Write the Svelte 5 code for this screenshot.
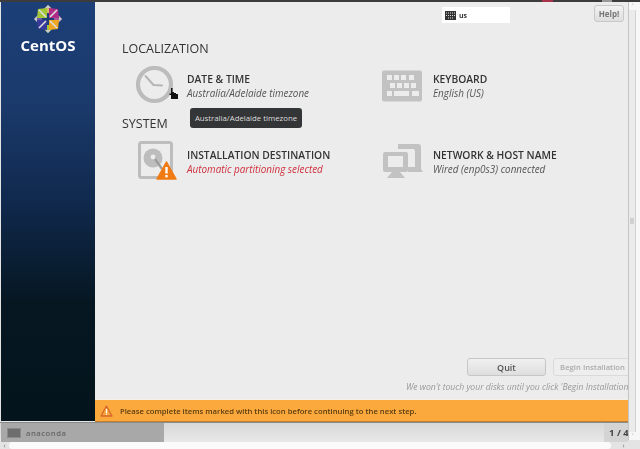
<script>
  const localization = [
    { icon: 'clock', title: 'DATE & TIME', sub: 'Australia/Adelaide timezone' },
    { icon: 'keyboard', title: 'KEYBOARD', sub: 'English (US)' }
  ];
  const system = [
    { icon: 'disk', title: 'INSTALLATION DESTINATION', sub: 'Automatic partitioning selected', warn: true },
    { icon: 'network', title: 'NETWORK & HOST NAME', sub: 'Wired (enp0s3) connected' }
  ];
</script>

{#snippet icon(name)}
  {#if name === 'clock'}
    <svg width="40" height="40" viewBox="0 0 40 40">
      <circle cx="18.5" cy="18.5" r="16.5" fill="#ececec" stroke="#bcbcbc" stroke-width="4.2"/>
      <path d="M9.5 10 L17.5 19 L26 19.5" fill="none" stroke="#b4b4b4" stroke-width="1.9" stroke-linecap="round" stroke-linejoin="round"/>
    </svg>
  {:else if name === 'keyboard'}
    <svg width="40" height="32" viewBox="0 0 40 32">
      <rect width="40" height="31" y="0.5" rx="2" fill="#c2c2c2"/>
      <g fill="#ececec">
        <rect x="5" y="5" width="5" height="5"/><rect x="12" y="5" width="5" height="5"/><rect x="19" y="5" width="5" height="5"/><rect x="27" y="5" width="5" height="5"/>
        <rect x="8" y="13" width="5" height="5"/><rect x="15" y="13" width="5" height="5"/><rect x="22" y="13" width="5" height="5"/><rect x="29" y="13" width="5" height="5"/>
        <rect x="5" y="21" width="5" height="5"/><rect x="12" y="21" width="15" height="5"/><rect x="30" y="21" width="7" height="5"/>
      </g>
    </svg>
  {:else if name === 'disk'}
    <svg class="over" width="42" height="40" viewBox="0 0 42 40">
      <rect x="3.5" y="0.5" width="32" height="35" rx="2" fill="#ececec" stroke="#bdbdbd" stroke-width="3"/>
      <circle cx="17" cy="16" r="9.5" fill="#bdbdbd"/>
      <circle cx="17" cy="15" r="2.4" fill="#ececec"/>
      <path d="M19 17 L26 27" stroke="#9c9c9c" stroke-width="2.2"/>
      <path d="M30.5 20 L40 37 H21 Z" fill="#f07a13" stroke="#f07a13" stroke-width="1.5" stroke-linejoin="round"/>
      <rect x="29.3" y="25" width="2.4" height="6.5" fill="#fff"/>
      <rect x="29.3" y="33" width="2.4" height="2.4" fill="#fff"/>
    </svg>
  {:else}
    <svg class="over" width="40" height="38" viewBox="0 0 40 38">
      <path d="M16 1 H36 Q39 1 39 4 V26 L41 29 H26 V24 H33 V8 Q33 6 31 6 H16 Z" fill="#c2c2c2"/>
      <path d="M3 9 H24 Q26 9 26 11 V27 Q26 29 24 29 H18 L23 35 H5 L10 29 H3 Q1 29 1 27 V11 Q1 9 3 9 Z" fill="#c2c2c2"/>
      <rect x="6" y="13" width="15" height="11" fill="#ececec"/>
    </svg>
  {/if}
{/snippet}

{#snippet spoke(item)}
  <div class="spoke">
    <div class="icon">{@render icon(item.icon)}</div>
    <div class="text">
      <div class="title">{item.title}</div>
      <div class="sub" class:warn={item.warn}>{item.sub}</div>
    </div>
  </div>
{/snippet}

<div class="screen">
  <div class="topline"></div>
  <div class="upper">
    <div class="left">
      <div class="workspace">
        <aside class="sidebar">
          <svg class="logo" width="30" height="30" viewBox="0 0 30 30">
            <path d="M15 1 L19 5 V9 H11 V5 Z" fill="#d9b96a"/>
            <path d="M29 15 L25 19 H21 V11 H25 Z" fill="#a55a9a"/>
            <path d="M15 29 L11 25 V21 H19 V25 Z" fill="#a4c639"/>
            <path d="M1 15 L5 11 H9 V19 H5 Z" fill="#6a5aa8"/>
            <path d="M14 14 V4 L5 5 L4 14 Z" fill="#a4c639"/>
            <path d="M16 14 V4 L25 5 L26 14 Z" fill="#b02a88"/>
            <path d="M14 16 V26 L5 25 L4 16 Z" fill="#3a3a9a"/>
            <path d="M16 16 V26 L25 25 L26 16 Z" fill="#efa724"/>
            <path d="M6 6 L13 13 M24 6 L17 13 M6 24 L13 17 M24 24 L17 17" stroke="#dcdcdc" stroke-width="1.6"/>
            <path d="M15 1 L18 4 H12 Z M15 29 L18 26 H12 Z M1 15 L4 12 V18 Z M29 15 L26 12 V18 Z" fill="#c8c8c8"/>
          </svg>
          <div class="brand">CentOS</div>
        </aside>
        <main class="main">
          <header class="topbar">
            <div class="layout">
              <svg width="11" height="9" viewBox="0 0 11 9"><rect width="11" height="9" fill="#333"/><path d="M1 2 H10 M1 4.5 H10 M3 7 H8" stroke="#ddd" stroke-width="1" stroke-dasharray="1 1"/></svg>
              <span>us</span>
            </div>
            <button class="help">Help!</button>
          </header>
          <section class="hub">
            <h2 class="loc">LOCALIZATION</h2>
            <div class="row row-loc">
              {#each localization as item}{@render spoke(item)}{/each}
            </div>
            <h2 class="sys">SYSTEM</h2>
            <div class="row row-sys">
              {#each system as item}{@render spoke(item)}{/each}
            </div>
          </section>
          <footer class="actions">
            <div class="buttons">
              <button class="btn">Quit</button>
              <button class="btn disabled">Begin Installation</button>
            </div>
            <p class="note">We won't touch your disks until you click 'Begin Installation'.</p>
          </footer>
          <div class="warning">
            <svg width="13" height="12" viewBox="0 0 13 12"><path d="M6.5 1 L12 11 H1 Z" fill="#f4a53c" stroke="#d9662a" stroke-width="1.3" stroke-linejoin="round"/><rect x="5.9" y="4" width="1.2" height="4" fill="#fff"/><rect x="5.9" y="8.6" width="1.2" height="1.2" fill="#fff"/></svg>
            <span>Please complete items marked with this icon before continuing to the next step.</span>
          </div>
          <div class="tooltip">Australia/Adelaide timezone</div>
          <svg class="cursor" width="10" height="12" viewBox="0 0 10 12"><path d="M2 0 H3.6 V4 H5 V5 H7 V6 H9 V11 H2 V7 H0.5 V5.5 H2 Z" fill="#111"/></svg>
        </main>
      </div>
      <div class="taskbar">
        <div class="task">
          <span class="task-icon"></span>
          <span>anaconda</span>
        </div>
        <div class="pager">1 / 4</div>
      </div>
    </div>
    <div class="vscroll">
      <div class="arrow">˄</div>
      <div class="thumb"><span class="grip"></span></div>
      <div class="arrow">˅</div>
    </div>
  </div>
  <div class="hscroll">
    <span class="harrow">‹</span>
    <span class="hthumb"></span>
    <span class="harrow end">›</span>
  </div>
</div>

<style>
  :global(body) { margin: 0; background: #e4e4e4; }
  .screen {
    width: 640px; height: 449px; display: flex; flex-direction: column; overflow: hidden;
    font-family: "Open Sans", "Noto Sans", sans-serif; color: #333;
    filter: blur(0.4px);
  }
  .topline {
    height: 2px; flex: none;
    background: linear-gradient(90deg, #3c3c3c 542px, #a8324a 542px, #a8324a 553px, #3c3c3c 553px, #3c3c3c 602px, #999 602px, #999 612px, #3c3c3c 612px);
  }
  .upper { display: flex; height: 440px; flex: none; }
  .left { width: 628px; flex: none; display: flex; flex-direction: column; }
  .workspace { display: flex; height: 420px; flex: none; }
  .sidebar {
    width: 94px; margin-left: 1px; flex: none; display: flex; flex-direction: column; align-items: center;
    background: linear-gradient(180deg, #1c3f78 0, #1b3a6c 100px, #10294d 200px, #061722 300px, #03141c 420px);
    margin-bottom: 1px;
  }
  .logo { margin-top: 2px; }
  .brand { color: #fff; font-size: 15px; font-weight: 700; line-height: 18px; margin-top: 2px; }
  .main { width: 533px; flex: none; display: flex; flex-direction: column; background: #ececec; position: relative; overflow: hidden; }
  .topbar { height: 26px; display: flex; align-items: flex-start; flex: none; }
  .layout {
    margin-left: 347px; margin-top: 5px; width: 68px; height: 16px; background: #fff; display: flex; align-items: center; gap: 3px;
    padding-left: 3px; box-sizing: border-box; font-size: 7px; font-weight: 700; color: #333;
  }
  .help {
    margin-left: 84px; margin-top: 3px; width: 30px; height: 17px; padding: 0; font: 700 8px "Open Sans", sans-serif; color: #777;
    border: 1px solid #c8c8c8; border-radius: 3px; background: linear-gradient(#f2f2f2, #dedede);
  }
  .hub { flex: 1; padding-left: 27px; }
  h2 { margin: 0; font-size: 12.5px; font-weight: 400; line-height: 16px; color: #333; }
  .loc { margin-top: 13px; }
  .row { display: flex; padding-left: 14px; }
  .row-loc { margin-top: 8px; }
  .sys { margin-top: 9px; }
  .row-sys { margin-top: 9px; }
  .spoke { width: 246px; display: flex; align-items: center; height: 42px; }
  .icon { width: 51px; flex: none; display: flex; align-items: center; }
  .icon .over { overflow: visible; }
  .title { font-size: 10.3px; font-weight: 600; line-height: 14px; color: #333; white-space: nowrap; }
  .sub { font-size: 9.9px; font-style: italic; line-height: 14px; color: #555; white-space: nowrap; }
  .sub.warn { color: #cf2f3c; }
  .actions { flex: none; }
  .buttons { display: flex; gap: 7px; padding-left: 372px; }
  .btn {
    width: 79px; flex: none; height: 18px; padding: 0; font: 600 9px "Open Sans", sans-serif; color: #555;
    border: 1px solid #c6c6c6; border-radius: 3px; background: linear-gradient(#f0f0f0, #dedede); white-space: nowrap;
  }
  .btn.disabled { color: #aaa; background: #eee; border-color: #dadada; font-size: 7.7px; }
  .note { margin: 5px 0 6px; padding-left: 311px; font-size: 8.6px; font-style: italic; color: #999; line-height: 12px; white-space: nowrap; }
  .warning {
    flex: none; height: 23px; background: #fba93d; border-top: 1px solid #f5f0e6; border-bottom: 1px solid #c08030; box-sizing: border-box; display: flex; align-items: center;
    padding-left: 5px; gap: 7px; font-size: 7.7px; font-weight: 600; color: #5a3c12; white-space: nowrap; overflow: hidden;
  }
  .tooltip {
    position: absolute; left: 95px; top: 106px; width: 112px; height: 20px; background: #333536; color: #ddd; border-radius: 3px;
    font-size: 7.8px; line-height: 20px; text-align: center; white-space: nowrap;
  }
  .cursor { position: absolute; left: 74px; top: 86px; }
  .vscroll { width: 12px; height: 438px; flex: none; background: #f7f7f7; display: flex; flex-direction: column; box-sizing: border-box; border-left: 1px solid #c4c4c4; }
  .arrow { font-size: 6px; height: 8px; line-height: 8px; color: #888; width: 7px; text-align: center; }
  .thumb { width: 7px; flex: 1; background: #ebebeb; border-right: 1px solid #d2d2d2; box-sizing: border-box; display: flex; align-items: center; justify-content: center; }
  .grip { width: 4px; height: 6px; background: #d0d0d0; display: block; }
  .taskbar { height: 20px; flex: none; display: flex; background: linear-gradient(#d8d8d8, #e8e8e8); border-top: 1px solid #8b8b8b; box-sizing: border-box; }
  .task {
    width: 163px; margin-left: 1px; background: #a8a8a8; display: flex; align-items: center; gap: 5px; padding-left: 6px; box-sizing: border-box;
    font-size: 7.7px; font-weight: 600; letter-spacing: .5px; color: #666;
  }
  .task-icon { width: 12px; height: 8px; background: #6e6e6e; border: 1px solid #8a8a8a; display: block; }
  .pager { margin-left: auto; width: 24px; background: #d4d4d4; font-size: 9.5px; font-weight: 700; color: #444; line-height: 19px; padding-left: 5px; box-sizing: border-box; white-space: nowrap; }
  .hscroll { flex: 1; display: flex; align-items: center; background: #e4e4e4; font-size: 7px; color: #777; }
  .harrow { width: 9px; text-align: center; line-height: 7px; }
  .harrow.end { margin-left: 8px; margin-right: 12px; }
  .hthumb { flex: 1; height: 7px; background: #fbfbfb; border-radius: 4px; }
</style>
